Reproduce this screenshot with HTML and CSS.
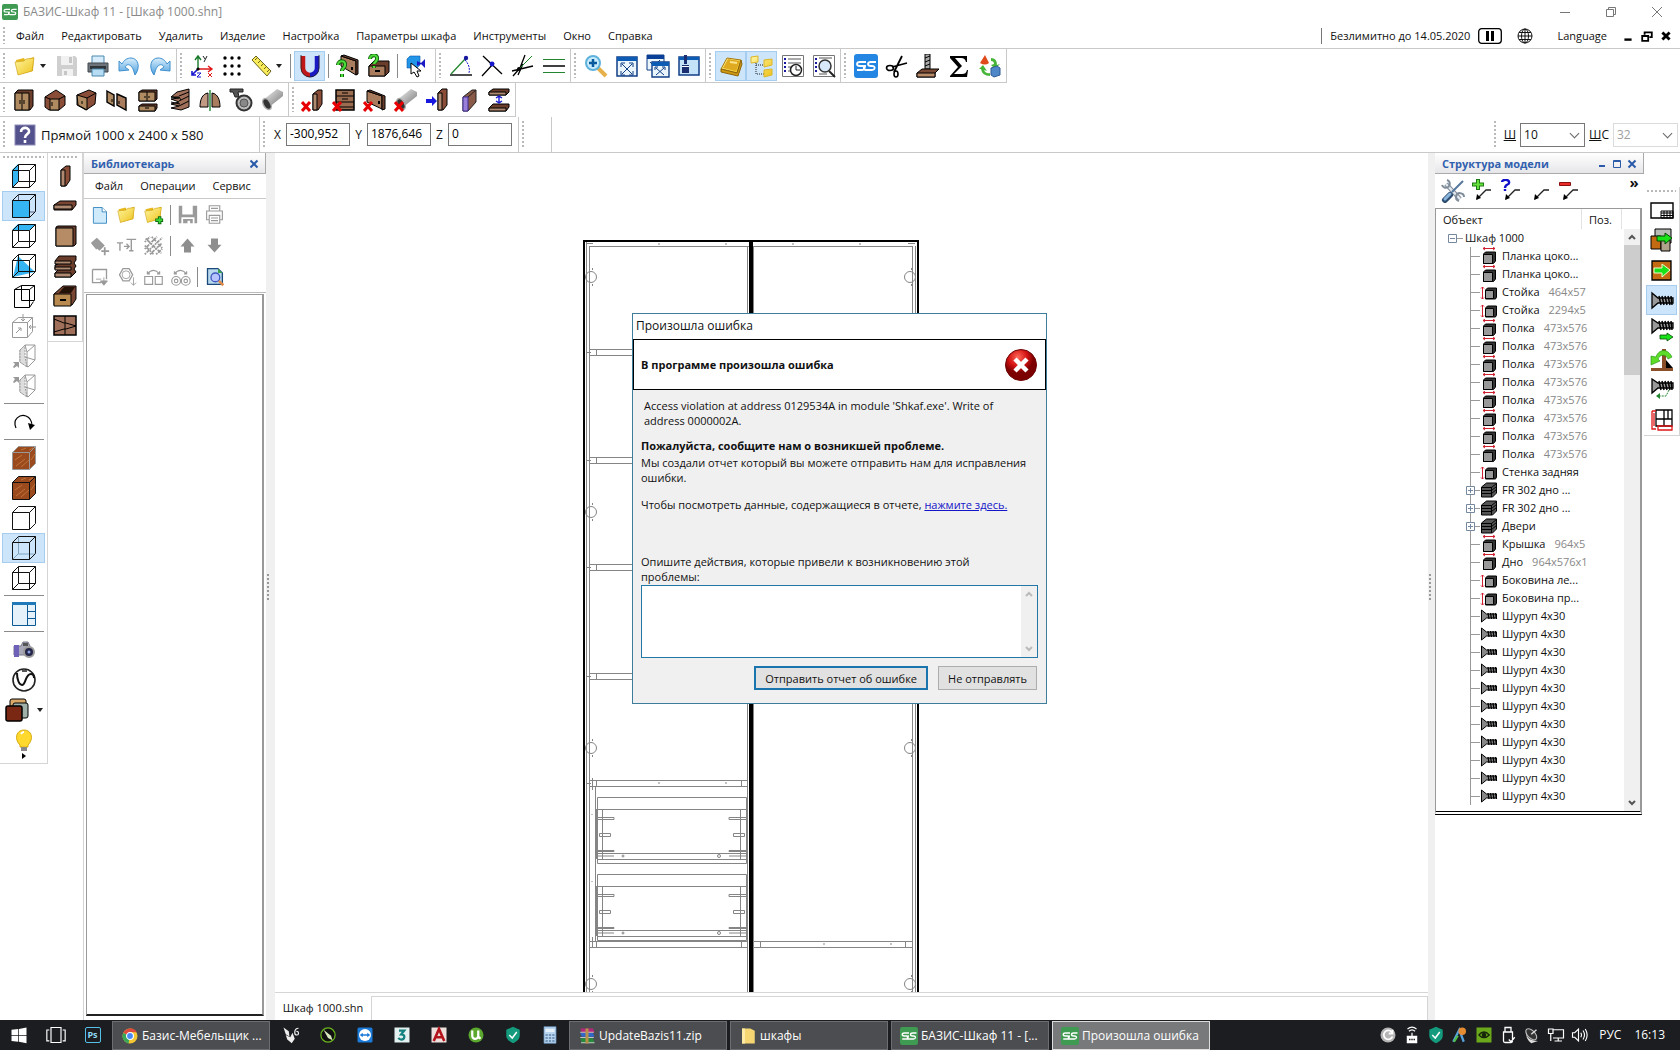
FILE: index.html
```html
<!DOCTYPE html>
<html lang="ru">
  <head>
    <meta charset="UTF-8" />
    <meta name="viewport" content="width=device-width, initial-scale=1.0" />
    <title>БАЗИС-Шкаф 11 - [Шкаф 1000.shn]</title>
    <link rel="stylesheet" href="styles.css">
  </head>
  <body>
    <svg class="sprite" aria-hidden="true">
      <defs>
        <linearGradient id="gold" x2="1" y2="1"><stop offset="0" stop-color="#fff6a0"/><stop offset="1" stop-color="#eec21c"/></linearGradient>
        <linearGradient id="blue" x2="0" y2="1"><stop offset="0" stop-color="#d8eefc"/><stop offset="1" stop-color="#4c9fdd"/></linearGradient>
        <linearGradient id="metal" x2="1" y2="1"><stop offset="0" stop-color="#f4f4f4"/><stop offset="1" stop-color="#707070"/></linearGradient>
        <radialGradient id="red" cx=".4" cy=".25"><stop offset="0" stop-color="#ff6a5a"/><stop offset=".6" stop-color="#d31212"/><stop offset="1" stop-color="#7d0000"/></radialGradient>
      </defs>

      <symbol id="logo" viewBox="0 0 24 24"><rect width="24" height="24" rx="3" fill="currentColor"/><path d="M12 8H6c-4 0-4 4 0 4h3c3 0 2 4-1 4H3M22 8h-5c-4 0-4 4 0 4h1c4 0 3 4 0 4h-6c-3 0-3-4 0-4" fill="none" stroke="#fff" stroke-width="1.800"/></symbol>

      <!-- main toolbar -->
      <symbol id="folder" viewBox="0 0 24 24"><path d="M3 6l8-2 1 2 9-3-1 14-15 4z" fill="#e8b81c"/><path d="M2 8l9-1 2-2 8-1-2 13-14 4z" fill="url(#gold)" stroke="#c99c14" stroke-width=".6"/></symbol>
      <symbol id="save" viewBox="0 0 24 24"><path d="M2 2h18l2 2v18H2z" fill="#cfcfcf"/><path d="M6 2h12v9H6zM7 15h11v7H7z" fill="#f1f1f1"/><path d="M14 3h3v6h-3zM9 17h3v4H9z" fill="#c6c6c6"/></symbol>
      <symbol id="printer" viewBox="0 0 24 24"><path d="M6 2h12v8H6z" fill="#d6ecfa" stroke="#4b88ad"/><path d="M2 9h20v9H2z" fill="#6d747b" stroke="#43494f"/><path d="M4 12h16v3H4z" fill="#2f3439"/><path d="M6 15h12v7H6z" fill="#b5dcf3" stroke="#4b88ad"/></symbol>
      <symbol id="undo" viewBox="0 0 24 24"><path d="M2 7v10l10-1-4-3c2-4 7-3 9 5l1 3C24 13 21 4 14 4 10 4 7 6 5 10z" fill="url(#blue)" stroke="#3f90cf"/></symbol>
      <symbol id="redo" viewBox="0 0 24 24"><path d="M22 7v10l-10-1 4-3c-2-4-7-3-9 5l-1 3C0 13 3 4 10 4c4 0 7 2 9 6z" fill="url(#blue)" stroke="#3f90cf"/></symbol>
      <symbol id="axes" viewBox="0 0 24 24"><path d="M8 15V2M5 6l3-4 3 4" stroke="#187a28" fill="none" stroke-width="1.400"/><path d="M8 15h13M18 12l4 3-4 3" stroke="#e01717" fill="none" stroke-width="1.400"/><path d="M8 15l-6 6M2 17v4h4" stroke="#1717d0" fill="none" stroke-width="1.600"/><circle cx="8" cy="15" r="1.600"/><path d="M13 2l2 3M17 2l-3 6" stroke="#222" fill="none"/><path d="M7 19h4l-4 4h4" stroke="#1717d0" fill="none"/><path d="M18 19l4 4M22 19l-4 4" stroke="#e01717"/></symbol>
      <symbol id="dots" viewBox="0 0 24 24"><g><circle cx="4" cy="4" r="1.700"/><circle cx="11" cy="4" r="1.700"/><circle cx="18" cy="4" r="1.700"/><circle cx="4" cy="12" r="1.700"/><circle cx="11" cy="12" r="1.700"/><circle cx="18" cy="12" r="1.700"/><circle cx="4" cy="20" r="1.700"/><circle cx="11" cy="20" r="1.700"/><circle cx="18" cy="20" r="1.700"/></g></symbol>
      <symbol id="ruler" viewBox="0 0 24 24"><path d="M2 6l4-4 15 15-4 5z" fill="#f8ec5a" stroke="#6b6420"/><path d="M7 4l-2 2M10 7L8 9M13 10l-2 2M16 13l-2 2M19 16l-2 2" stroke="#6b6420"/></symbol>
      <symbol id="magnet" viewBox="0 0 24 24"><path d="M5 2v12a7 7 0 0 0 7 7" fill="none" stroke="#c01818" stroke-width="4.500"/><path d="M19 2v12a7 7 0 0 1-7 7" fill="none" stroke="#1a1ac4" stroke-width="4.500"/><path d="M3 1v13a9 9 0 0 0 18 0V1" fill="none" stroke="#222" stroke-width=".8"/></symbol>
      <symbol id="door-q" viewBox="0 0 24 24"><path d="M5 2l15 5v14L5 12z" fill="#a87c5c" stroke="#000"/><path d="M5 2l3-1 14 5v14l-2 1V7z" fill="#6b3e2c" stroke="#000"/><path d="M16 13v3" stroke="#000" stroke-width="2"/><path d="M2 11c0-5 8-5 7 0 0 3-3 3-3 6M6 20v3" fill="none" stroke="#0b5c0b" stroke-width="4"/><path d="M2 11c0-5 8-5 7 0 0 3-3 3-3 6M6 20v3" fill="none" stroke="#4fdc3a" stroke-width="2.200"/></symbol>
      <symbol id="drawer-q" viewBox="0 0 24 24"><path d="M2 12l5-5h15v11l-4 4H2z" fill="#6b3e2c" stroke="#000"/><path d="M2 12h16v10H2z" fill="#a87c5c" stroke="#000"/><path d="M8 17h5" stroke="#000" stroke-width="2"/><path d="M3 5c0-5 8-5 7 0 0 3-3 3-3 5M7 12v2" fill="none" stroke="#0b5c0b" stroke-width="4"/><path d="M3 5c0-5 8-5 7 0 0 3-3 3-3 5M7 12v2" fill="none" stroke="#4fdc3a" stroke-width="2.200"/></symbol>
      <symbol id="pick" viewBox="0 0 24 24"><path d="M2 5l3-3h10v9l-3 3H2z" fill="#2196e8" stroke="#0a57a8" stroke-width=".6"/><path d="M12 7l4 2 4-4v9l-4-4-4 2z" fill="#1a1ac4"/><path d="M6 9v11l3-2 3 5 2-1-2-5h4z" fill="#fff" stroke="#000"/></symbol>
      <symbol id="angle" viewBox="0 0 24 24"><path d="M1 21h22" stroke="#000" stroke-width="1.400"/><path d="M2 20L17 4" stroke="#21862f" stroke-width="1.300"/><path d="M16 6c4 4 5 9 4 13" fill="none" stroke="#1717d0" stroke-dasharray="2 1"/><circle cx="17" cy="4" r="2.200" fill="#1717a0"/></symbol>
      <symbol id="cross-pt" viewBox="0 0 24 24"><path d="M3 2l19 18M14 9L2 22" stroke="#000" stroke-width="1.300"/><circle cx="12" cy="10" r="2.400" fill="#1717d0"/></symbol>
      <symbol id="rays" viewBox="0 0 24 24"><path d="M9 14L14 1M1 17l21-5M7 21l5-11M2 22l7-8" stroke="#000" stroke-width="1.300"/><path d="M9 14L21 2" stroke="#21862f"/><circle cx="8" cy="15" r="2"/></symbol>
      <symbol id="lines" viewBox="0 0 24 24"><path d="M1 5.500h22M1 18.500h22" stroke="#21862f"/><path d="M1 12h22" stroke="#000" stroke-width="1.500"/></symbol>
      <symbol id="zoom-in" viewBox="0 0 24 24"><path d="M14 14l8 8" stroke="#e6b14a" stroke-width="4"/><circle cx="9" cy="9" r="7" fill="#c8ecfb" stroke="#5fb2dd" stroke-width="2"/><path d="M5 9h8M9 5v8" stroke="#075a9c" stroke-width="2.500"/></symbol>
      <symbol id="fit" viewBox="0 0 24 24"><path d="M2 3h20v19H2z" fill="#eaf5fc" stroke="#123f86" stroke-width="1.500"/><path d="M2 3h20v4H2z" fill="#0c5bb5"/><path d="M7 10l10 10M17 10L7 20M6 13V9h4M14 9h4v4M18 17v4h-4M10 21H6v-4" fill="none" stroke="#123f86"/></symbol>
      <symbol id="fit-all" viewBox="0 0 24 24"><path d="M1 1h17v15H1z" fill="#eaf5fc" stroke="#123f86"/><path d="M1 1h17v4H1z" fill="#0a3f98"/><path d="M4 8l5 5M14 6l-4 4" stroke="#123f86"/><path d="M6 8h17v15H6z" fill="#eaf5fc" stroke="#123f86" stroke-width="1.400"/><path d="M6 8h17v4H6z" fill="#0c5bb5"/><path d="M10 14l8 7M18 14l-8 7M9 16v-3h3M16 13h3v3" fill="none" stroke="#123f86"/></symbol>
      <symbol id="brush-win" viewBox="0 0 24 24"><path d="M2 3h20v18H2z" fill="#c4e3f8" stroke="#123f86" stroke-width="1.500"/><path d="M2 3h20v3H2z" fill="#0c5bb5"/><path d="M7 1h3v9H7zM5 11h7v8H5z" fill="#1b2f70"/><path d="M5 12.500h7" stroke="#fff"/></symbol>
      <symbol id="book" viewBox="0 0 24 24"><path d="M2 15L8 4l14 2-4 13z" fill="url(#gold)" stroke="#a87a0e"/><path d="M2 15l16 4 4-13 1 4-4 12-17-4z" fill="#d09812" stroke="#8b650c"/><path d="M4 14L9 5l12 2-4 10z" fill="#e0aa20"/><path d="M11 8l7 1" stroke="#fbe48a" stroke-width="2"/></symbol>
      <symbol id="tree" viewBox="0 0 24 24"><path d="M6 9v11h8M6 11h8" fill="none" stroke="#222" stroke-dasharray="1 1"/><path d="M1 3l7-1v6l-7 1zM14 6l8-1v6l-8 2zM14 16l8-1v6l-8 2z" fill="url(#gold)" stroke="#dcb62a"/></symbol>
      <symbol id="list-clock" viewBox="0 0 24 24"><path d="M1.500 1.500h21v21h-21z" fill="#fff" stroke="#777"/><path d="M7 5h13M7 9h13M7 13h4M7 17h3" stroke="#555"/><path d="M4 4v16" stroke="#1717a0" stroke-width="2" stroke-dasharray="2 2"/><circle cx="15" cy="16" r="5.500" fill="#fff" stroke="#222" stroke-width="1.500"/><path d="M15 12v4h4" fill="none" stroke="#222"/></symbol>
      <symbol id="list-find" viewBox="0 0 24 24"><path d="M1.500 1.500h21v21h-21z" fill="#fff" stroke="#777"/><path d="M7 4h13M7 20h8" stroke="#555"/><path d="M4 4v16" stroke="#1717a0" stroke-width="2" stroke-dasharray="2 2"/><path d="M17 17l6 6" stroke="#222" stroke-width="2"/><circle cx="13" cy="12" r="6" fill="#d8e9fb" stroke="#333" stroke-width="1.500"/></symbol>
      <symbol id="scissors" viewBox="0 0 24 24"><path d="M17 2L9 18M22 9L7 13" stroke="#000" stroke-width="1.800"/><ellipse cx="5" cy="14" rx="3.500" ry="2.500" fill="none" stroke="#000" stroke-width="1.600"/><ellipse cx="11" cy="20" rx="2" ry="3" fill="none" stroke="#000" stroke-width="1.600"/></symbol>
      <symbol id="drill" viewBox="0 0 24 24"><path d="M9 0h5v15H9z" fill="#aaa" stroke="#000"/><path d="M9 4l5-2M9 8l5-2M9 12l5-2" stroke="#000"/><path d="M1 19l5-4h17l-4 4v4H1z" fill="#7a4a35" stroke="#000"/><path d="M1 19h18v4H1z" fill="#b88a68" stroke="#000"/></symbol>
      <symbol id="sigma" viewBox="0 0 24 24"><path d="M3 2h17v6h-1c-1-3-2-4-5-4H8l7 8-8 8h8c3 0 4-1 5-4h1l-1 7H3v-1l8-9-8-9z"/></symbol>
      <symbol id="shapes" viewBox="0 0 24 24"><path d="M2 9l5-8 4 8q-4 3-9 0z" fill="#e04a1a"/><path d="M13 4q6 0 6 7l3-1-5 5-4-4 3-1q0-3-3-3z" fill="#46b436"/><path d="M5 11l4 6-3-1q2 4 6 3v3q-8 0-9-7H1z" fill="#46b436"/><path d="M13 14l6-2 3 2v7l-6 2-3-2z" fill="#4f88c8" stroke="#2d5b94"/></symbol>

      <!-- furniture toolbar -->
      <symbol id="wardrobe" viewBox="0 0 24 24"><path d="M3 5l3-3h15v16l-3 4H3z" fill="#6b3e2c" stroke="#000"/><path d="M3 5h14v17H3z" fill="#b08a60" stroke="#000"/><path d="M10 5v17M8 12v4M12 12v4" stroke="#000"/></symbol>
      <symbol id="corner1" viewBox="0 0 24 24"><path d="M2 9l11-7 9 6v9l-6 5H6l-4-3z" fill="#8a4e38" stroke="#000"/><path d="M7 11h9v11H7z" fill="#b08a60" stroke="#000"/><path d="M2 9l5 2M22 8l-6 3M9 14v4" stroke="#000"/></symbol>
      <symbol id="corner2" viewBox="0 0 24 24"><path d="M3 7l12-5 7 3-1 11-9 6-9-5z" fill="#8a4e38" stroke="#000"/><path d="M3 7l10 3v12l-9-5z" fill="#b08a60" stroke="#000"/><path d="M13 10l9-5M8 13v3" stroke="#000"/></symbol>
      <symbol id="doors" viewBox="0 0 24 24"><path d="M2 3l7 4v11l-7-4z" fill="#b08a60" stroke="#000" stroke-width="1.400"/><path d="M12 6l9 4v12l-9-5z" fill="#a87c5c" stroke="#000" stroke-width="1.400"/><path d="M7 11v3M14 13v3" stroke="#000"/></symbol>
      <symbol id="chest" viewBox="0 0 24 24"><path d="M3 4l3-2h15v9l-2 2H3zM3 18l3-2h15v4l-2 3H3z" fill="#6b3e2c" stroke="#000"/><path d="M3 4h16v9H3zM3 18h16v5H3z" fill="#b08a60" stroke="#000"/><path d="M11 4v9M9 8v2M13 8v2M9 20h4" stroke="#000"/></symbol>
      <symbol id="shelves" viewBox="0 0 24 24"><path d="M4 9l6-5 12-3v18l-8 3-10-2 8-2-8-2 8-2-8-3 8-1z" fill="#a0705a" stroke="#000"/><path d="M12 8l10-4M12 13l10-5M12 18l10-5M4 9h8l2 3M4 14l9 2" stroke="#000" fill="none"/></symbol>
      <symbol id="arch" viewBox="0 0 24 24"><path d="M10 5C4 6 2 12 2 19h8z" fill="#c29a84" stroke="#000"/><path d="M14 5c6 1 8 7 8 14h-8z" fill="#a87c5c" stroke="#000"/><path d="M12 2v21" stroke="#21862f" stroke-width="1.400"/></symbol>
      <symbol id="wheel" viewBox="0 0 24 24"><path d="M1 1h13v3H9l1 5H6L4 4H1z" fill="#555" stroke="#222"/><circle cx="15" cy="15" r="7.500" fill="#bbb" stroke="#333" stroke-width="2"/><circle cx="15" cy="15" r="4" fill="#888" stroke="#555"/></symbol>
      <symbol id="tube" viewBox="0 0 24 24"><path d="M3 12L17 1l6 3v4L8 20z" fill="url(#metal)"/><ellipse cx="7" cy="16" rx="3.500" ry="6" transform="rotate(-30 7 16)" fill="#333" stroke="#aaa" stroke-width="1.500"/></symbol>
      <symbol id="panel-v" viewBox="0 0 24 24"><path d="M8 6l5-4h4v14l-4 6H8z" fill="#8a4e38" stroke="#000"/><path d="M8 6h4v16H8z" fill="#b08a70" stroke="#000"/></symbol>
      <symbol id="cross" viewBox="0 0 24 24"><path d="M1 14l8 9M9 14l-8 9" stroke="#e60000" stroke-width="3"/></symbol>
      <symbol id="rack" viewBox="0 0 24 24"><path d="M4 2h18v20H4z" fill="#9a6c50" stroke="#000" stroke-width="1.500"/><path d="M4 8h18M4 14h18M4 19h18M10 5h6M10 11h6" stroke="#000"/></symbol>
      <symbol id="door" viewBox="0 0 24 24"><path d="M4 3l15 5v13L4 14z" fill="#a87c5c" stroke="#000"/><path d="M4 3l3-1 15 6v13l-3 1V8z" fill="#6b3e2c" stroke="#000"/><path d="M16 13v3" stroke="#000" stroke-width="2"/></symbol>
      <symbol id="insert" viewBox="0 0 24 24"><path d="M13 5l4-4h5v16l-4 5h-5z" fill="#8a4e38" stroke="#000"/><path d="M13 5h4v17h-4z" fill="#b08a70" stroke="#000"/><path d="M1 11h6V8l5 5-5 5v-3H1z" fill="#1717e0"/></symbol>
      <symbol id="edge" viewBox="0 0 24 24"><path d="M7 9l9-7h4v12l-8 9H7z" fill="#8a5a48" stroke="#222"/><path d="M7 9h5v14H7z" fill="#9a80d8" stroke="#3c2c90"/><path d="M12 9l8-7" stroke="#222"/></symbol>
      <symbol id="gap" viewBox="0 0 24 24"><path d="M2 4l4-3h16v3l-3 3H2zM2 20l4-4h16v3l-3 4H2z" fill="#6b3e2c" stroke="#000"/><path d="M2 4h17v3H2zM2 20h17v3H2z" fill="#b08a70" stroke="#000"/><path d="M12 8v7M9 10l3-2 3 2M9 13l3 2 3-2" fill="none" stroke="#1717d0" stroke-width="1.400"/></symbol>
      <symbol id="help" viewBox="0 0 24 24"><rect x="2" y="2" width="20" height="20" fill="#54528c" stroke="#8d8bb8"/><path d="M8 9c0-6 9-5 8 0-1 3-4 2-4 6M12 17v3" fill="none" stroke="#fff" stroke-width="2.600"/></symbol>

      <!-- view cubes -->
      <symbol id="cube-wire" viewBox="0 0 24 24"><path d="M.5 6.500h17v17H.5zM6.500.5h17v17h-17zM.5 6.500l6-6M17.500 6.500l6-6M17.500 23.500l6-6M.5 23.500l6-6" fill="none" stroke="currentColor"/></symbol>
      <symbol id="cube-solid" viewBox="0 0 24 24"><path d="M.5 6.500l6-6h17v17l-6 6H.5zM.5 6.500h17v17M17.500 6.500l6-6" fill="none" stroke="currentColor"/></symbol>
      <symbol id="cube-wood" viewBox="0 0 24 24"><path d="M.5 6.500l6-6h17v17l-6 6H.5z" fill="#9a4a1c" stroke="currentColor"/><path d="M3 14l7-5M4 20l9-7M9 21l8-7M9 4l5-2M17 4l4-2M19 14l4-6" stroke="#c07438"/><path d="M.5 6.500h17v17M17.500 6.500l6-6" fill="none" stroke="currentColor"/></symbol>
      <symbol id="cube-cut" viewBox="0 0 24 24"><path d="M8 6l5-5h10v15l-7 7-8-5z" fill="#fff" stroke="#9a9a9a"/><path d="M8 6l5-5v12l2 10-7-5z" fill="#ddd" stroke="#9a9a9a" stroke-dasharray="2 1"/><path d="M15 23V8l8-7M13 1l2 7M13 13l10 3" fill="none" stroke="#9a9a9a"/></symbol>
      <symbol id="rotate" viewBox="0 0 24 24"><path d="M4 18C0 9 8 4 14 6c5 2 6 6 6 10" fill="none" stroke="#000" stroke-width="1.200"/><path d="M16 13l7 2-5 5z"/></symbol>
      <symbol id="layout" viewBox="0 0 24 24"><path d="M.5.500h23v23H.5z" fill="#e6f2f9" stroke="#0c5a94"/><path d="M0 0h24v3H0z" fill="#1f79b8"/><path d="M15.500 3v21M16 9.500h8M16 16.500h8" stroke="#0c5a94"/></symbol>
      <symbol id="camera" viewBox="0 0 24 24"><path d="M2 8h7l2-4h5l2 4v9H2z" fill="#a8a8b8" stroke="#77778c"/><path d="M2 7h5v12H2z" fill="#6f60b8"/><path d="M11 5h5v3h-5z" fill="#555"/><circle cx="17" cy="14" r="5" fill="#25254a" stroke="#9a9a9a" stroke-width="2"/><circle cx="17" cy="14" r="1.500" fill="#8aa0e0"/></symbol>
      <symbol id="vray" viewBox="0 0 24 24"><circle cx="12" cy="12" r="11" fill="#fff" stroke="#222" stroke-width="1.600"/><path d="M5 5c0 6 2 12 5 12 4 0 3-11 9-11 3 0 3 3 3 4" fill="none" stroke="#111" stroke-width="2"/><path d="M10 3h5" stroke="#555" stroke-width="2"/></symbol>
      <symbol id="materials" viewBox="0 0 24 24"><rect x="5" y="1" width="16" height="16" rx="2" fill="#d8a868" stroke="#000"/><rect x="8" y="5" width="15" height="15" rx="2" fill="#9fb0a8" stroke="#000"/><rect x="1" y="8" width="16" height="15" rx="2" fill="#7a2814" stroke="#000" stroke-width="1.500"/></symbol>
      <symbol id="bulb" viewBox="0 0 24 24"><path d="M8 16C2 10 4 1 12 1s10 9 4 15v2H8z" fill="#ffd92e" stroke="#d8aa10"/><path d="M9 5q1-2 3-2" stroke="#fff" stroke-width="2"/><path d="M9 18h6v4H9z" fill="#8a8a8a"/></symbol>
      <symbol id="board-h" viewBox="0 0 24 24"><path d="M1 11l6-4h16v4l-4 5H1z" fill="#7a4634" stroke="#000"/><path d="M1 11h18v4H1z" fill="#b08a70" stroke="#000"/></symbol>
      <symbol id="board-f" viewBox="0 0 24 24"><path d="M3 3l2-1h18v18l-2 2H3z" fill="#6b3e2c" stroke="#000"/><path d="M3 4h17v18H3z" fill="#b58c66" stroke="#000"/></symbol>
      <symbol id="stack" viewBox="0 0 24 24"><path d="M2 7l4-5h17v4l-2 3 2 3-2 3 2 3-5 5H2v-4l3-3-3-1v-4l3-1z" fill="#6b3e2c" stroke="#000"/><path d="M2 7h16v3H2zM2 13h16v3H2zM2 19h16v4H2z" fill="#b08a70" stroke="#000"/></symbol>
      <symbol id="box" viewBox="0 0 24 24"><path d="M1 10l9-8h13v13l-4 6H1z" fill="#7a4634" stroke="#000"/><path d="M6 9l5-6h11l-4 6z" fill="#241208"/><path d="M1 10h17v12H1z" fill="#b88a50" stroke="#000"/><path d="M7 16h6" stroke="#000" stroke-width="2"/></symbol>
      <symbol id="hatch-door" viewBox="0 0 24 24"><path d="M1 2h22v19H1z" fill="#a0705a" stroke="#000" stroke-width="1.500"/><path d="M12 2v19M1 5l10 4 2 0 10 3M1 18l10-3 2 0 10-3" fill="none" stroke="#000"/></symbol>

      <!-- librarian -->
      <symbol id="page" viewBox="0 0 24 24"><path d="M5 4h10l5 5v13H5z" fill="#cfeafa" stroke="#2f82bd"/><path d="M15 4v5h5" fill="#fff" stroke="#2f82bd"/></symbol>
      <symbol id="plus" viewBox="0 0 24 24"><path d="M19 14v9M14 18.500h9" stroke="#0b6a0b" stroke-width="4"/><path d="M19 15v7M15 18.500h7" stroke="#3cd83c" stroke-width="2"/></symbol>
      <symbol id="disk" viewBox="0 0 24 24"><path d="M2 2h4v10h12V2h5v20h-3v-7H5v7H2z" fill="#9a9a9a"/><path d="M7 17h11v5h-3v-3h-3v3H7z" fill="#9a9a9a"/></symbol>
      <symbol id="print-o" viewBox="0 0 24 24"><path d="M6 8V2h12v6M6 18H3V8h18v10h-3M6 13h12v9H6zM8 5h8M8 16h8M8 19h8" fill="none" stroke="#9a9a9a" stroke-width="1.300"/></symbol>
      <symbol id="tag" viewBox="0 0 24 24"><path d="M2 9l7-6 9 9-6 6z" fill="#9a9a9a"/><path d="M4 10l5 6M18 14v9M14 18.500h9" stroke="#9a9a9a" stroke-width="2"/></symbol>
      <symbol id="rename" viewBox="0 0 24 24"><path d="M1 9h7M4.500 9v9M12 5h11M17.500 5v13M15 18h5M9 13h6M12 10l3 3-3 3" fill="none" stroke="#9a9a9a" stroke-width="1.600"/></symbol>
      <symbol id="texture" viewBox="0 0 24 24"><path d="M2 8l6-6M2 16L16 2M2 22L22 3M8 22l14-13M15 22l7-6M3 4l18 17M10 2l12 13M2 12l10 10" stroke="#999" stroke-width="2" stroke-dasharray="2 1 4 1"/></symbol>
      <symbol id="up" viewBox="0 0 24 24"><path d="M12 4l8 9h-4v7H8v-7H4z" fill="#8e8e8e"/></symbol>
      <symbol id="down" viewBox="0 0 24 24"><path d="M12 20l8-9h-4V4H8v7H4z" fill="#8e8e8e"/></symbol>
      <symbol id="insert-o" viewBox="0 0 24 24"><path d="M4 4h16v11M14 19H4V4" fill="none" stroke="#9a9a9a" stroke-width="1.500"/><path d="M8 15h6M17 13v7M13 17l4 5 4-5z" stroke="#9a9a9a" fill="#9a9a9a"/></symbol>
      <symbol id="nut-o" viewBox="0 0 24 24"><path d="M8 3h7l4 7-4 7H8l-4-7z" fill="none" stroke="#9a9a9a" stroke-width="1.500"/><circle cx="11.500" cy="10" r="4.500" fill="none" stroke="#9a9a9a"/><path d="M20 13v9M17 19l3 3 3-3" fill="none" stroke="#9a9a9a"/></symbol>
      <symbol id="mirror-o" viewBox="0 0 24 24"><path d="M2 12h9v9H2zM14 12h8v9h-8zM5 9q7-8 14 0M5 6v3h3M19 6v3h-3" fill="none" stroke="#9a9a9a" stroke-width="1.300"/></symbol>
      <symbol id="wheels-o" viewBox="0 0 24 24"><path d="M5 9q7-8 14 0M5 6v3h3M19 6v3h-3" fill="none" stroke="#9a9a9a" stroke-width="1.300"/><g fill="none" stroke="#9a9a9a" stroke-width="1.300"><circle cx="7" cy="17" r="5"/><circle cx="18" cy="17" r="5"/><circle cx="7" cy="17" r="2"/><circle cx="18" cy="17" r="2"/></g></symbol>
      <symbol id="preview" viewBox="0 0 24 24"><path d="M4 3h12l5 5v13H4z" fill="#b9d9ee" stroke="#1a4a7a" stroke-width="1.500"/><path d="M16 3v5h5z" fill="#3fa648"/><circle cx="13" cy="13" r="5" fill="#b8c4ff" stroke="#4058c0" stroke-width="1.500"/><path d="M17 17l5 5" stroke="#e08a4a" stroke-width="3"/></symbol>

      <!-- structure panel -->
      <symbol id="tools" viewBox="0 0 24 24"><path d="M5 5l14 15" stroke="#7f8c99" stroke-width="4.500"/><path d="M5 5l14 15" stroke="#e4eaf0" stroke-width="2.500"/><path d="M6 1a4 4 0 1 1-5 5M18 22a4 4 0 1 1 5-4" fill="none" stroke="#7f8c99" stroke-width="2"/><path d="M22 2L11 13" stroke="#54779b" stroke-width="2"/><path d="M9 16l-5 5" stroke="#2c4c70" stroke-width="6" stroke-linecap="round"/><path d="M9 15l-5 5" stroke="#8ab4dc" stroke-width="3" stroke-linecap="round"/></symbol>
      <symbol id="leader" viewBox="0 0 24 24"><path d="M21 11h-5L7 20" fill="none" stroke="#222" stroke-width="1.300"/><path d="M6 21l1-6 4 4z"/></symbol>
      <symbol id="l-plus" viewBox="0 0 24 24"><path d="M8 0v11M2 5.500h12" stroke="#1e7a14" stroke-width="4"/><path d="M8 1v9M3 5.500h10" stroke="#67e23c" stroke-width="2"/></symbol>
      <symbol id="l-ask" viewBox="0 0 24 24"><path d="M3 3c0-3 8-3 7 1 0 2-4 1-4 5M6 10v2" fill="none" stroke="#1010c8" stroke-width="2.400"/></symbol>
      <symbol id="l-minus" viewBox="0 0 24 24"><path d="M2.500 3.500h11v3h-11z" fill="#ec2b2b" stroke="#8a1010"/></symbol>
      <symbol id="panel-h-i" viewBox="0 0 18 18"><path d="M3 1.500h12M5 0L3 1.500 5 3M13 0l2 1.500L13 3" fill="none" stroke="#cf2030"/><path d="M3.500 7l2-2h10v9l-2 2.500h-10z" fill="#333" stroke="#000"/><path d="M3.500 7.500h9v9h-9z" fill="#999" stroke="#000"/></symbol>
      <symbol id="panel-v-i" viewBox="0 0 18 18"><path d="M2.500 4v12M1 5.500L2.500 4 4 5.500M1 14.500L2.500 16 4 14.500" fill="none" stroke="#cf2030"/><path d="M5.500 7l2-2h9v9l-1 2h-10z" fill="#333" stroke="#000"/><path d="M5.500 7.500h8v8h-8z" fill="#999" stroke="#000"/></symbol>
      <symbol id="stack-i" viewBox="0 0 18 18"><path d="M1.500 6l5-4h10v10l-4 4h-11z" fill="#555" stroke="#000"/><path d="M1.500 6.500h10l5-4M1.500 9.500h10l5-4M1.500 12.500h10l5-4M11.500 6v10" fill="none" stroke="#000"/></symbol>
      <symbol id="screw-i" viewBox="0 0 18 18"><path d="M1.500 3l5 4h10v4h-10l-5 4z" fill="#888" stroke="#000"/><path d="M8 6l1 6M10.500 6l1 6M13 6l1 6M15.500 6l1 6" stroke="#000" stroke-width="1.300"/></symbol>

      <!-- right bar -->
      <symbol id="sheet" viewBox="0 0 24 24"><path d="M1 5h22v15H1z" fill="#fff" stroke="#000" stroke-width="1.400"/><path d="M11 13h12v7H11zM11 15h12M11 17.500h12M14 13v7M17 13v7M20 13v7" fill="none" stroke="#000"/></symbol>
      <symbol id="mat-arrow" viewBox="0 0 24 24"><path d="M5 1h16v14H5z" fill="#b7bcb4" stroke="#000"/><path d="M1 8h10v13H1z" fill="#c46a12" stroke="#000"/><path d="M11 12h9v11h-9z" fill="#b0a28c" stroke="#000"/><path d="M7 8h8V5l7 5-7 6v-3H7z" fill="#18e218" stroke="#074a07"/></symbol>
      <symbol id="mat-go" viewBox="0 0 24 24"><path d="M2 3h19v19H2z" fill="#c46a12" stroke="#000" stroke-width="1.300"/><path d="M4 10h8V6l8 6-8 7v-4H4z" fill="#18e218" stroke="#efffcf"/></symbol>
      <symbol id="screw" viewBox="0 0 24 24"><path d="M2 5l6 5h15v5H8l-6 5z" fill="#999" stroke="#000" stroke-width="1.300"/><path d="M9 8l2 9M12 8l2 9M15 8l2 9M18 8l2 9M21 8l1 9" stroke="#000" stroke-width="1.500"/></symbol>
      <symbol id="screw-go" viewBox="0 0 24 24"><path d="M2 1l6 4h15v5H8l-6 5z" fill="#999" stroke="#000" stroke-width="1.300"/><path d="M9 3l2 9M12 3l2 9M15 3l2 9M18 3l2 9M21 3l1 9" stroke="#000" stroke-width="1.500"/><path d="M10 17h7v-2l6 4-6 4v-2h-7z" fill="#18e218" stroke="#074a07" stroke-width=".8"/></symbol>
      <symbol id="turn" viewBox="0 0 24 24"><path d="M12 1h4v21h-4zM1 20h22v3H1z" fill="#8a4e28"/><path d="M16 12v8h7z"/><path d="M22 9C17-1 8 2 6 9L1 8v9l9-4-2-2c2-5 8-5 10 0z" fill="#5ddc28" stroke="#1f8a10" stroke-width=".6"/></symbol>
      <symbol id="screw-pt" viewBox="0 0 24 24"><path d="M2 1l6 4h15v5H8l-6 5z" fill="#999" stroke="#000" stroke-width="1.300"/><path d="M9 3l2 9M12 3l2 9M15 3l2 9M18 3l2 9M21 3l1 9" stroke="#000" stroke-width="1.500"/><path d="M19 12l-3 6h-7" fill="none" stroke="#21862f" stroke-dasharray="2 1"/><path d="M6 18l4-3v6z" fill="#21862f"/></symbol>
      <symbol id="plan" viewBox="0 0 24 24"><path d="M6 2h16v16H6zM6 11h16M14 2v16M18 2v9" fill="none" stroke="#000" stroke-width="1.300"/><path d="M2 3v18h4M4 5v13M8 22h14v-4H8zM2 3h4" fill="none" stroke="#e01717" stroke-width="1.300"/></symbol>

      <!-- taskbar -->
      <symbol id="win" viewBox="0 0 24 24"><path d="M2 5l9-1v8H2zM12 4l10-2v10H12zM2 13h9v8l-9-1zM12 13h10v10l-10-2z" fill="#fff"/></symbol>
      <symbol id="taskview" viewBox="0 0 24 24"><path d="M6 3h12v18H6zM4 6H1v13h3M20 6h3v13h-3" fill="none" stroke="#fff" stroke-width="1.400"/></symbol>
      <symbol id="chrome" viewBox="0 0 24 24"><circle cx="12" cy="12" r="10" fill="#f3c733"/><path d="M12 12L3 8a10 10 0 0 1 18-1h-9z" fill="#dd4b3e"/><path d="M12 12l-2 10A10 10 0 0 1 3 8z" fill="#3aa757"/><circle cx="12" cy="12" r="4.600" fill="#4a8af4" stroke="#fff" stroke-width="1.500"/></symbol>
      <symbol id="t-shift" viewBox="0 0 24 24"><path d="M2 2l7 5 1 7-5-3zM5 12l6 3 3-6 3 8-4 6-6-5z" fill="#eee"/><path d="M22 3q-5 0-5 6 0 3 3 3 2 0 2-2.500T19 7" fill="none" stroke="#eee" stroke-width="1.600"/></symbol>
      <symbol id="t-corel" viewBox="0 0 24 24"><circle cx="12" cy="12" r="9.500" fill="#111" stroke="#6cb51e" stroke-width="1.600"/><path d="M6 5l10 8 2 6-6-3z" fill="#d8e8c0"/></symbol>
      <symbol id="t-tv" viewBox="0 0 24 24"><rect x="2" y="2" width="20" height="20" rx="2" fill="#1c7bd8"/><circle cx="12" cy="12" r="8" fill="#fff"/><path d="M5 12l4-3v2h6V9l4 3-4 3v-2H9v2z" fill="#1c7bd8"/></symbol>
      <symbol id="t-max" viewBox="0 0 24 24"><path d="M2 2h20v20H2z" fill="#e3f1f0"/><path d="M8 6h7l-4 5c6 0 5 7 0 7-2 0-3-1-4-2" fill="none" stroke="#12817f" stroke-width="3"/></symbol>
      <symbol id="t-acad" viewBox="0 0 24 24"><path d="M2 2h20v20H2z" fill="#eee0dd"/><path d="M5 20l7-16 7 16M8 15h8" fill="none" stroke="#b3141c" stroke-width="3.500"/></symbol>
      <symbol id="t-ut" viewBox="0 0 24 24"><circle cx="12" cy="12" r="10" fill="#5aa82e"/><path d="M7 6v7c0 6 8 5 8 0V6M15 14l3 3" fill="none" stroke="#fff" stroke-width="3"/></symbol>
      <symbol id="t-shield" viewBox="0 0 24 24"><path d="M12 1l9 4v8c0 5-5 8-9 10-4-2-9-5-9-10V5z" fill="#149a7d"/><path d="M7 12l4 4 6-8" fill="none" stroke="#fff" stroke-width="2"/></symbol>
      <symbol id="t-calc" viewBox="0 0 24 24"><path d="M4 1h16v22H4z" fill="#b8d4ee" stroke="#6a94bd"/><path d="M6 4h12v4H6z" fill="#e4f0fa"/><path d="M6 12h12M6 16h12M6 20h12" stroke="#5880a8" stroke-width="2" stroke-dasharray="3 1.500"/></symbol>
      <symbol id="t-rar" viewBox="0 0 24 24"><path d="M3 2h17l2 5H5z" fill="#b4287a"/><path d="M3 8h17l2 5H5z" fill="#3468c8"/><path d="M3 15h17l2 6H5z" fill="#288a3c"/><path d="M3 7h18M3 14h18M4 21h18" stroke="#eee"/><path d="M10 2h4v20h-4z" fill="#b8924a"/></symbol>
      <symbol id="t-folder" viewBox="0 0 24 24"><path d="M4 2h11l6 3v17H4z" fill="#f6d672"/><path d="M4 2h4v20H4z" fill="#ffe9a4"/></symbol>
      <symbol id="y-sync" viewBox="0 0 24 24"><circle cx="12" cy="12" r="10" fill="#b5b5b5"/><path d="M17 8a6 6 0 1 0 1 6M18 5v5h-5" fill="none" stroke="#fff" stroke-width="2.400"/></symbol>
      <symbol id="y-router" viewBox="0 0 24 24"><path d="M5 13h14v10H5z" fill="#fff"/><path d="M12 14V9M8 7q4-4 8 0M6 4q6-5 12 0" fill="none" stroke="#fff" stroke-width="1.600"/><path d="M8 18h8" stroke="#222" stroke-width="2" stroke-dasharray="2 1"/></symbol>
      <symbol id="y-pen" viewBox="0 0 24 24"><path d="M3 21L11 5l6 16" fill="none" stroke="#58a3dd" stroke-width="3"/><circle cx="15" cy="7" r="5" fill="#e58b32"/><path d="M4 21l5-8" stroke="#4fbf48" stroke-width="3"/></symbol>
      <symbol id="y-nv" viewBox="0 0 24 24"><path d="M2 2h20v20H2z" fill="#6ba81b"/><path d="M5 12q7-8 14 0-7 7-14 0" fill="none" stroke="#16240a" stroke-width="1.800"/><circle cx="12" cy="12" r="3" fill="#16240a"/></symbol>
      <symbol id="y-usb" viewBox="0 0 24 24"><path d="M8 8V2h8v6M6 8h12v12q0 2-2 2H8q-2 0-2-2zM13 18l3 3 5-6" fill="none" stroke="#fff" stroke-width="1.700"/></symbol>
      <symbol id="y-dish" viewBox="0 0 24 24"><ellipse cx="11" cy="11" rx="5" ry="9" transform="rotate(-45 11 11)" fill="#333" stroke="#bbb" stroke-width="1.500"/><path d="M4 6q0 14 16 14l-9 3q-8-6-7-17" fill="#ddd"/><path d="M11 11l7-6" stroke="#ddd" stroke-width="2"/></symbol>
      <symbol id="y-net" viewBox="0 0 24 24"><path d="M8 5h14v11H8M15 16v4M10 20h10M2 4h6v6H2zM5 10v10" fill="none" stroke="#fff" stroke-width="1.600"/></symbol>
      <symbol id="y-vol" viewBox="0 0 24 24"><path d="M2 9h3l5-5v16l-5-5H2zM13 9q2 3 0 6M16 6q4 6 0 12M19 4q5 8 0 16" fill="none" stroke="#fff" stroke-width="1.500"/></symbol>
    </svg>

    <div class="app">
      <header class="titlebar">
        <svg class="icon16 green"><use href="#logo"/></svg>
        <h1>БАЗИС-Шкаф 11 - [Шкаф 1000.shn]</h1>
        <div class="win-buttons">
          <button aria-label="Свернуть"><svg viewBox="0 0 12 12"><path d="M1 6.500h10"/></svg></button>
          <button aria-label="Восстановить"><svg viewBox="0 0 12 12"><path d="M1.500 3.500h7v7h-7zM3.500 3V1.500h7v7H9"/></svg></button>
          <button aria-label="Закрыть"><svg viewBox="0 0 12 12"><path d="M1 1l10 10M11 1L1 11"/></svg></button>
        </div>
      </header>

      <nav class="menubar">
        <i class="grip"></i>
        <button>Файл</button><button>Редактировать</button><button>Удалить</button><button>Изделие</button><button>Настройка</button><button>Параметры шкафа</button><button>Инструменты</button><button>Окно</button><button>Справка</button>
        <div class="menu-right">
          <span class="license">Безлимитно до 14.05.2020</span>
          <button class="pause" aria-label="Пауза"><svg viewBox="0 0 24 16"><rect x=".7" y=".7" width="22.600" height="14.600" rx="3" fill="none" stroke="#000" stroke-width="1.300"/><path d="M8 3h3v10H8zM13 3h3v10h-3z"/></svg></button>
          <svg class="globe" viewBox="0 0 16 16"><path d="M8 1v14M1 8h14M2 4.500h12M2 11.500h12" /><circle cx="8" cy="8" r="7"/><ellipse cx="8" cy="8" rx="3.500" ry="7"/></svg>
          <button class="language">Language</button>
          <div class="mdi-buttons">
            <button aria-label="Свернуть окно"><svg viewBox="0 0 10 10"><path d="M2 8h6" stroke-width="2"/></svg></button>
            <button aria-label="Восстановить окно"><svg viewBox="0 0 10 10"><path d="M1 5h5v4H1zM3 4V2h6v4H7" stroke-width="1.500"/></svg></button>
            <button aria-label="Закрыть окно"><svg viewBox="0 0 10 10"><path d="M2 2l6 6M8 2L2 8" stroke-width="2.400"/></svg></button>
          </div>
        </div>
      </nav>

      <div class="toolrow">
        <div class="group"><i class="grip"></i>
          <button class="tool" aria-label="Открыть"><svg><use href="#folder"/></svg></button><button class="drop" aria-label="Недавние файлы"></button>
          <button class="tool" aria-label="Сохранить"><svg><use href="#save"/></svg></button>
          <button class="tool" aria-label="Печать"><svg><use href="#printer"/></svg></button>
          <button class="tool" aria-label="Отменить"><svg><use href="#undo"/></svg></button>
          <button class="tool" aria-label="Вернуть"><svg><use href="#redo"/></svg></button>
        </div>
        <div class="group snap"><i class="grip"></i>
          <button class="tool" aria-label="Оси"><svg><use href="#axes"/></svg></button>
          <button class="tool" aria-label="Сетка"><svg><use href="#dots"/></svg></button>
          <button class="tool tight" aria-label="Размеры"><svg><use href="#ruler"/></svg></button><button class="drop" aria-label="Виды размеров"></button>
          <i class="sep"></i>
          <button class="tool on" aria-label="Привязка"><svg><use href="#magnet"/></svg></button>
          <i class="sep"></i>
          <button class="tool" aria-label="Двери"><svg><use href="#door-q"/></svg></button>
          <button class="tool" aria-label="Ящики"><svg><use href="#drawer-q"/></svg></button>
          <i class="sep"></i>
          <button class="tool" aria-label="Выбор"><svg><use href="#pick"/></svg></button>
        </div>
        <div class="group"><i class="grip"></i>
          <button class="tool" aria-label="Угол"><svg><use href="#angle"/></svg></button>
          <button class="tool" aria-label="Пересечение"><svg><use href="#cross-pt"/></svg></button>
          <button class="tool" aria-label="Лучи"><svg><use href="#rays"/></svg></button>
          <button class="tool" aria-label="Параллели"><svg><use href="#lines"/></svg></button>
        </div>
        <div class="group"><i class="grip"></i>
          <button class="tool" aria-label="Увеличить"><svg><use href="#zoom-in"/></svg></button>
          <button class="tool" aria-label="Показать все"><svg><use href="#fit"/></svg></button>
          <button class="tool" aria-label="Показать во всех окнах"><svg><use href="#fit-all"/></svg></button>
          <button class="tool" aria-label="Обновить"><svg><use href="#brush-win"/></svg></button>
        </div>
        <div class="group"><i class="grip"></i>
          <button class="tool on" aria-label="Библиотекарь"><svg><use href="#book"/></svg></button>
          <button class="tool on" aria-label="Структура модели"><svg><use href="#tree"/></svg></button>
          <button class="tool" aria-label="История"><svg><use href="#list-clock"/></svg></button>
          <button class="tool" aria-label="Поиск"><svg><use href="#list-find"/></svg></button>
        </div>
        <div class="group"><i class="grip"></i>
          <button class="tool sky" aria-label="Базис"><svg><use href="#logo"/></svg></button>
          <button class="tool" aria-label="Раскрой"><svg><use href="#scissors"/></svg></button>
          <button class="tool" aria-label="Сверление"><svg><use href="#drill"/></svg></button>
          <button class="tool" aria-label="Смета"><svg><use href="#sigma"/></svg></button>
          <button class="tool" aria-label="Обмен"><svg><use href="#shapes"/></svg></button>
        </div>
      </div>

      <div class="toolrow furniture">
        <div class="group"><i class="grip"></i>
          <button class="tool" aria-label="Прямой шкаф"><svg><use href="#wardrobe"/></svg></button>
          <button class="tool" aria-label="Угловой шкаф"><svg><use href="#corner1"/></svg></button>
          <button class="tool" aria-label="Скошенный шкаф"><svg><use href="#corner2"/></svg></button>
          <button class="tool" aria-label="Двери"><svg><use href="#doors"/></svg></button>
          <button class="tool" aria-label="Тумба"><svg><use href="#chest"/></svg></button>
          <button class="tool" aria-label="Полки"><svg><use href="#shelves"/></svg></button>
          <button class="tool" aria-label="Арка"><svg><use href="#arch"/></svg></button>
          <button class="tool" aria-label="Опора"><svg><use href="#wheel"/></svg></button>
          <button class="tool" aria-label="Штанга"><svg><use href="#tube"/></svg></button>
        </div>
        <div class="group"><i class="grip"></i>
          <button class="tool" aria-label="Удалить стойку"><svg><use href="#panel-v" x="4"/><use href="#cross"/></svg></button>
          <button class="tool" aria-label="Удалить секцию"><svg><use href="#rack"/><use href="#cross"/></svg></button>
          <button class="tool" aria-label="Удалить дверь"><svg><use href="#door"/><use href="#cross"/></svg></button>
          <button class="tool" aria-label="Удалить штангу"><svg><use href="#tube"/><use href="#cross"/></svg></button>
          <button class="tool" aria-label="Вставить стойку"><svg><use href="#insert"/></svg></button>
          <button class="tool" aria-label="Кромка"><svg><use href="#edge"/></svg></button>
          <button class="tool" aria-label="Расстояние"><svg><use href="#gap"/></svg></button>
        </div>
      </div>

      <div class="statusrow">
        <div class="group model"><i class="grip"></i><svg><use href="#help"/></svg><span>Прямой 1000 x 2400 x 580</span></div>
        <div class="group coords"><i class="grip"></i>
          <label for="cx">X</label><input id="cx" value="-300,952">
          <label for="cy">Y</label><input id="cy" value="1876,646">
          <label for="cz">Z</label><input id="cz" value="0">
        </div>
        <div class="group blank"><i class="grip"></i></div>
        <div class="steps"><i class="grip"></i>
          <label for="sh"><u>Ш</u></label><span class="combo"><select id="sh"><option>10</option></select></span>
          <label for="shs"><u>Ш</u>С</label><span class="combo"><select id="shs" disabled><option>32</option></select></span>
        </div>
      </div>

      <main class="work">
        <div class="side views">
          <i class="grip-h"></i>
          <button aria-label="Вид слева"><svg viewBox="0 0 24 24"><path d="M0 6l6-6v18l-6 6z" fill="#35b6f2"/><use href="#cube-wire"/></svg></button>
          <button class="on" aria-label="Вид спереди"><svg viewBox="0 0 24 24"><path d="M6.500 1v17H23" fill="none" stroke="#557"/><path d="M0 6h18v18H0z" fill="#35b6f2"/><use href="#cube-solid"/></svg></button>
          <button aria-label="Вид сверху"><svg viewBox="0 0 24 24"><path d="M0 6l6-6h18l-6 6z" fill="#35b6f2"/><use href="#cube-wire"/></svg></button>
          <button aria-label="Изометрия"><svg viewBox="0 0 24 24"><path d="M6 2l17 16L1 23z" fill="#35b6f2"/><use href="#cube-wire"/></svg></button>
          <button aria-label="Перспектива"><svg viewBox="0 0 24 24"><path d="M2.500 5.500h15v18h-15zM9.500 1.500h13v15h-13zM2.500 5.500l7-4M17.500 5.500l5-4M17.500 23.500l4-6" fill="none" stroke="#000"/></svg></button>
          <button aria-label="Спроецировать" class="dim"><svg viewBox="0 0 24 24"><path d="M.5 8.500l6-5h14v14l-5 6H.5zM.5 8.500h15v15M15.500 8.500l5-5M4 19l5-5M6 14h3v3M11 0v7M9 5l2 2 2-2M24 13h-7M19 11l-2 2 2 2" fill="none" stroke="currentColor"/></svg></button>
          <button aria-label="Сечение вперед"><svg viewBox="0 0 24 24"><use href="#cube-cut"/><path d="M1 18h6v6l-2-2-3 2-1-1 2-3z" fill="#999"/></svg></button>
          <button aria-label="Сечение назад"><svg viewBox="0 0 24 24"><use href="#cube-cut"/><path d="M1 3h6v6L5 7 2 9 1 8l2-3z" fill="#999"/></svg></button>
          <i class="rule"></i>
          <button aria-label="Повернуть"><svg><use href="#rotate"/></svg></button>
          <i class="rule"></i>
          <button aria-label="Текстуры" class="dim"><svg><use href="#cube-wood"/></svg></button>
          <button aria-label="Текстуры с контуром"><svg><use href="#cube-wood"/></svg></button>
          <button aria-label="Без невидимых линий"><svg><use href="#cube-solid"/></svg></button>
          <button class="on" aria-label="Полупрозрачный"><svg viewBox="0 0 24 24"><path d="M6.500 1v17H23M.5 23.500l6-6" fill="none" stroke="#7fa4bf"/><use href="#cube-solid"/></svg></button>
          <button aria-label="Каркас"><svg><use href="#cube-wire"/></svg></button>
          <i class="rule"></i>
          <button aria-label="Окна"><svg><use href="#layout"/></svg></button>
          <i class="rule"></i>
          <button aria-label="Снимок"><svg><use href="#camera"/></svg></button>
          <button aria-label="Рендер"><svg><use href="#vray"/></svg></button>
          <button class="with-drop" aria-label="Материалы"><svg><use href="#materials"/></svg><i class="tri"></i></button>
          <button class="lamp" aria-label="Свет"><svg><use href="#bulb"/></svg><i class="tri-right"></i></button>
        </div>

        <div class="side panels">
          <i class="grip-h"></i>
          <button aria-label="Вертикальная панель"><svg><use href="#panel-v"/></svg></button>
          <button aria-label="Горизонтальная панель"><svg><use href="#board-h"/></svg></button>
          <button aria-label="Фронтальная панель"><svg><use href="#board-f"/></svg></button>
          <button aria-label="Набор полок"><svg><use href="#stack"/></svg></button>
          <button aria-label="Ящик"><svg><use href="#box"/></svg></button>
          <button aria-label="Двери"><svg><use href="#hatch-door"/></svg></button>
        </div>

        <section class="dock library">
          <div class="dock-title"><h2>Библиотекарь</h2><button aria-label="Закрыть"><svg viewBox="0 0 10 10"><path d="M1.500 1.500l7 7M8.500 1.500l-7 7" stroke-width="2"/></svg></button></div>
          <nav class="dock-menu"><button>Файл</button><button>Операции</button><button>Сервис</button></nav>
          <div class="lib-tools">
            <div class="lib-row">
              <button aria-label="Создать"><svg><use href="#page"/></svg></button>
              <button aria-label="Открыть"><svg><use href="#folder"/></svg></button>
              <button aria-label="Добавить"><svg><use href="#folder"/><use href="#plus"/></svg></button>
              <i class="sep"></i>
              <button aria-label="Сохранить"><svg><use href="#disk"/></svg></button>
              <button aria-label="Печать"><svg><use href="#print-o"/></svg></button>
            </div>
            <div class="lib-row">
              <button aria-label="Метка"><svg><use href="#tag"/></svg></button>
              <button aria-label="Переименовать"><svg><use href="#rename"/></svg></button>
              <button aria-label="Текстура"><svg><use href="#texture"/></svg></button>
              <i class="sep"></i>
              <button aria-label="Вверх"><svg><use href="#up"/></svg></button>
              <button aria-label="Вниз"><svg><use href="#down"/></svg></button>
            </div>
            <div class="lib-row">
              <button aria-label="Вставить"><svg><use href="#insert-o"/></svg></button>
              <button aria-label="Крепеж"><svg><use href="#nut-o"/></svg></button>
              <button aria-label="Заменить"><svg><use href="#mirror-o"/></svg></button>
              <button aria-label="Заменить фурнитуру"><svg><use href="#wheels-o"/></svg></button>
              <i class="sep"></i>
              <button aria-label="Просмотр"><svg><use href="#preview"/></svg></button>
            </div>
          </div>
          <div class="lib-list"></div>
        </section>

        <i class="splitter"></i>

        <section class="document">
          <svg class="canvas" role="img" aria-label="Шкаф 1000">
            <defs>
              <g id="drawer" class="thin">
                <path d="M14.500 557.500h149v66h-149zM14 569.500h149M14 613.500h149M14 619.500h149M19.500 569v50M157.500 569v50"/>
                <path d="M13.500 569v50" stroke-width="2"/>
                <path d="M14 577.500h17v2H14M16.500 593.500h11v3h-11zM14 610.500h17v1H14M14 616h17M163 577.500h-17v2h17M161.500 593.500h-11v3h11zM163 610.500h-17v1h17M163 616h-17"/>
                <circle cx="40" cy="616" r="1"/><circle cx="136" cy="616" r="1.500"/>
              </g>
              <g id="hinge" class="thin"><circle cx="8" cy="0" r="5.500"/><path d="M9.500 -9v2M9.500 7v2"/></g>
            </defs>
            <g transform="translate(308 87)">
              <g class="thin">
                <path d="M6 6.500h323M3.500 0v755M6.500 6v755M164.500 6v755M170.500 6v755M329.500 6v755M332.500 6v755"/>
                <path d="M6 109.500h158M6 115.500h158M6 217.500h158M6 223.500h158M6 324.500h158M6 330.500h158M6 433.500h158M6 439.500h158M6 540.500h158M6 546.500h158M6 701.500h158M6 707.500h158M170 701.500h159M170 707.500h159"/>
                <path d="M3 112.500h5M6.500 109.500h7v6M3 220.500h5M6.500 217.500h7v6M3 327.500h5M6.500 324.500h7v6M3 436.500h5M6.500 433.500h7v6M3 543.500h5M13.500 540v6M158.500 540v6M13.500 701v6M158.500 701v6M177.500 701v6M322.500 701v6M9.500 538v12M9.500 697v10M12.500 546v155"/>
                <path d="M3 3.500h7M325 3.500h7M76 3v2M143 3v2M210 3v2M277 3v2M76 542v2M143 542v2M240 704h2M307 704h2M9 574v1M9 641v1"/>
              </g>
              <use href="#drawer"/><use href="#drawer" y="77"/>
              <use href="#hinge" y="37"/><use href="#hinge" y="272"/><use href="#hinge" y="508"/><use href="#hinge" y="744"/>
              <use href="#hinge" x="319" y="37"/><use href="#hinge" x="319" y="508"/><use href="#hinge" x="319" y="744"/>
              <path d="M1 760V1h334v760" class="bold"/>
              <path d="M168 0v760" class="divider"/>
            </g>
          </svg>
          <div class="doc-tabs"><button class="doc-tab">Шкаф 1000.shn</button><i></i></div>
        </section>

        <i class="splitter thin-split"></i>

        <section class="dock structure">
          <div class="dock-title"><h2>Структура модели</h2>
            <button aria-label="Свернуть"><svg viewBox="0 0 10 10"><path d="M2 7h6" stroke-width="2"/></svg></button>
            <button aria-label="Развернуть"><svg viewBox="0 0 10 10"><path d="M1.500 1.500h7v7h-7zM1 2.500h8"/></svg></button>
            <button aria-label="Закрыть"><svg viewBox="0 0 10 10"><path d="M1.500 1.500l7 7M8.500 1.500l-7 7" stroke-width="2"/></svg></button>
          </div>
          <div class="structure-tools">
            <button aria-label="Настройка"><svg><use href="#tools"/></svg></button>
            <button aria-label="Добавить позицию"><svg><use href="#leader"/><use href="#l-plus"/></svg></button>
            <button aria-label="Запросить позицию"><svg><use href="#leader"/><use href="#l-ask"/></svg></button>
            <button aria-label="Позиция"><svg><use href="#leader"/></svg></button>
            <button aria-label="Удалить позицию"><svg><use href="#leader"/><use href="#l-minus"/></svg></button>
            <button class="more" aria-label="Еще">»</button>
          </div>
          <div class="tree">
            <div class="tree-head"><span>Объект</span><span>Поз.</span><span></span></div>
            <div class="tree-body">
              <ul class="tree-list" id="tree-list"></ul>
              <div class="scrollbar"><svg viewBox="0 0 16 16"><path d="M5 10l3-3 3 3"/></svg><i></i><svg viewBox="0 0 16 16"><path d="M5 6l3 3 3-3"/></svg></div>
            </div>
          </div>
        </section>

        <div class="side right">
          <i class="grip-h"></i>
          <button aria-label="Чертеж"><svg><use href="#sheet"/></svg></button>
          <button aria-label="Заменить материалы"><svg><use href="#mat-arrow"/></svg></button>
          <button aria-label="Заменить материал"><svg><use href="#mat-go"/></svg></button>
          <button class="on" aria-label="Крепеж"><svg><use href="#screw"/></svg></button>
          <button aria-label="Заменить крепеж"><svg><use href="#screw-go"/></svg></button>
          <button aria-label="Развернуть крепеж"><svg><use href="#turn"/></svg></button>
          <button aria-label="Указать крепеж"><svg><use href="#screw-pt"/></svg></button>
          <button aria-label="План"><svg><use href="#plan"/></svg></button>
        </div>
      </main>

      <footer class="taskbar">
        <button class="task" aria-label="Пуск"><svg><use href="#win"/></svg></button>
        <button class="task" aria-label="Представление задач"><svg class="wide"><use href="#taskview"/></svg></button>
        <button class="task"><span class="ps">Ps</span></button>
        <button class="task-window"><svg><use href="#chrome"/></svg><span>Базис-Мебельщик ...</span></button>
        <button class="task" aria-label="Shift"><svg><use href="#t-shift"/></svg></button>
        <button class="task" aria-label="Corel"><svg><use href="#t-corel"/></svg></button>
        <button class="task" aria-label="TeamViewer"><svg><use href="#t-tv"/></svg></button>
        <button class="task" aria-label="3ds Max"><svg><use href="#t-max"/></svg></button>
        <button class="task" aria-label="AutoCAD"><svg><use href="#t-acad"/></svg></button>
        <button class="task" aria-label="uTorrent"><svg><use href="#t-ut"/></svg></button>
        <button class="task" aria-label="Защита"><svg><use href="#t-shield"/></svg></button>
        <button class="task" aria-label="Калькулятор"><svg><use href="#t-calc"/></svg></button>
        <button class="task-window"><svg><use href="#t-rar"/></svg><span>UpdateBazis11.zip</span></button>
        <button class="task-window"><svg><use href="#t-folder"/></svg><span>шкафы</span></button>
        <button class="task-window green"><svg><use href="#logo"/></svg><span>БАЗИС-Шкаф 11 - [...</span></button>
        <button class="task-window green active"><svg><use href="#logo"/></svg><span>Произошла ошибка</span></button>
        <div class="tray">
          <svg><use href="#y-sync"/></svg><svg><use href="#y-router"/></svg><svg><use href="#t-shield"/></svg><svg><use href="#y-pen"/></svg><svg><use href="#y-nv"/></svg><svg><use href="#y-usb"/></svg><svg><use href="#y-dish"/></svg><svg><use href="#y-net"/></svg><svg><use href="#y-vol"/></svg>
          <span>РУС</span><time>16:13</time>
        </div>
      </footer>
    </div>

    <form class="dialog" role="dialog" aria-labelledby="dialog-title">
      <div class="dialog-title" id="dialog-title">Произошла ошибка</div>
      <div class="dialog-head">
        <strong>В программе произошла ошибка</strong>
        <svg viewBox="0 0 32 32"><circle cx="16" cy="16" r="15.500" fill="url(#red)" stroke="#6d0606"/><path d="M10 10l12 12M22 10L10 22" stroke="#fff" stroke-width="4.500"/></svg>
      </div>
      <div class="dialog-body">
        <p class="fault">Access violation at address 0129534A in module 'Shkaf.exe'. Write of address 0000002A.</p>
        <p class="ask"><strong>Пожалуйста, сообщите нам о возникшей проблеме.</strong></p>
        <p class="sent">Мы создали отчет который вы можете отправить нам для исправления ошибки.</p>
        <p class="view">Чтобы посмотреть данные, содержащиеся в отчете, <a href="#report">нажмите здесь.</a></p>
        <label for="steps">Опишите действия, которые привели к возникновению этой проблемы:</label>
        <div class="memo">
          <textarea id="steps"></textarea>
          <div class="scrollbar off"><svg viewBox="0 0 16 16"><path d="M5 10l3-3 3 3"/></svg><svg viewBox="0 0 16 16"><path d="M5 6l3 3 3-3"/></svg></div>
        </div>
        <div class="dialog-buttons">
          <button type="button" class="default">Отправить отчет об ошибке</button>
          <button type="button">Не отправлять</button>
        </div>
      </div>
    </form>

    <script src="script.js"></script>
  </body>
</html>
```

FILE: styles.css
```css
* {
  box-sizing: border-box;
}

body {
  margin: 0;
  font: 11px/16px "Open Sans", "Noto Sans", sans-serif;
  color: #111;
  background: #fff;
  overflow: hidden;
}

button {
  font: inherit;
  color: inherit;
  background: none;
  border: 0;
  padding: 0;
}

h1,
h2,
p,
ul {
  margin: 0;
  padding: 0;
}

svg {
  display: block;
  flex: none;
  width: 24px;
  height: 24px;
}

.sprite {
  position: absolute;
  width: 0;
  height: 0;
}

.app {
  display: flex;
  flex-direction: column;
  height: 100vh;
}

.green {
  color: #3f9a52;
}

/* title and menu */

.titlebar {
  display: flex;
  align-items: center;
  gap: 5px;
  height: 23px;
  padding-left: 2px;
}

.icon16 {
  width: 16px;
  height: 16px;
}

.titlebar h1 {
  flex: 1;
  font-size: 12px;
  font-weight: 400;
  color: #8a8a8a;
}

.win-buttons {
  display: flex;
}

.win-buttons button {
  display: flex;
  justify-content: center;
  width: 46px;
}

.win-buttons svg {
  width: 12px;
  height: 12px;
  fill: none;
  stroke: #777;
}

.menubar {
  display: flex;
  align-items: center;
  gap: 17px;
  height: 26px;
  border-bottom: 1px solid #c9c9c9;
}

.menubar .grip {
  margin-right: -10px;
}

.grip {
  flex: none;
  width: 9px;
  align-self: stretch;
  background: repeating-linear-gradient(#b9b9b9 0 2px, transparent 2px 4px) 3px 4px / 2px calc(100% - 8px) no-repeat;
}

.grip-h {
  flex: none;
  height: 8px;
  width: 100%;
  background: repeating-linear-gradient(90deg, #b9b9b9 0 2px, transparent 2px 4px) 3px 3px / calc(100% - 6px) 2px no-repeat;
}

.menu-right {
  display: flex;
  align-items: center;
  margin-left: auto;
  padding-right: 8px;
}

.license {
  border-left: 1px solid #777;
  padding-left: 8px;
}

.pause {
  margin-left: 8px;
}

.pause svg {
  width: 24px;
  height: 16px;
}

.globe {
  width: 16px;
  height: 16px;
  margin: 0 24px 0 15px;
  fill: none;
  stroke: #111;
}

.mdi-buttons {
  display: flex;
  gap: 7px;
  margin-left: 15px;
}

.mdi-buttons svg {
  width: 12px;
  height: 12px;
  fill: none;
  stroke: #000;
}

/* toolbars */

.toolrow {
  display: flex;
}

.group {
  display: flex;
  align-items: center;
  height: 34px;
  padding-right: 1px;
  border-right: 1px solid #c9c9c9;
  border-bottom: 1px solid #c9c9c9;
}

.snap {
  width: 259px;
}

.tool {
  display: flex;
  align-items: center;
  justify-content: center;
  width: 31px;
  height: 30px;
}

.tight {
  width: 28px;
}

.furniture .grip {
  width: 8px;
}

.on {
  background: #cce5fa;
  box-shadow: inset 0 0 0 1px #a5cdef;
}

.sky {
  color: #2386e2;
}

.drop {
  width: 11px;
}

.drop::before,
.tri {
  content: "";
  display: block;
  width: 0;
  border: 3px solid transparent;
  border-top: 4px solid #222;
  border-bottom: 0;
}

.sep {
  flex: none;
  width: 1px;
  height: 24px;
  margin: 0 3px;
  background: #8a8a8a;
}

.statusrow {
  display: flex;
  height: 36px;
  border-bottom: 1px solid #c9c9c9;
}

.statusrow .group {
  height: 35px;
  border-bottom: 0;
}

.model {
  width: 260px;
  gap: 4px;
  font-size: 13px;
}

.coords {
  width: 259px;
  font-size: 12px;
}

.coords label {
  width: 17px;
  text-align: center;
}

.coords input {
  width: 64px;
  height: 23px;
  padding: 0 3px 3px;
  border: 1px solid #777;
  font: inherit;
}

.blank {
  width: 33px;
}

.steps {
  display: flex;
  align-items: center;
  margin-left: auto;
  padding-right: 2px;
  font-size: 12px;
}

.steps label {
  padding: 0 4px;
}

.combo {
  position: relative;
}

.combo::after {
  content: "";
  position: absolute;
  top: 7px;
  right: 7px;
  width: 6px;
  height: 6px;
  border: solid #666;
  border-width: 0 1px 1px 0;
  transform: rotate(45deg);
}

.combo select {
  display: block;
  appearance: none;
  width: 65px;
  height: 24px;
  padding: 0 3px;
  border: 1px solid #777;
  border-radius: 0;
  background: #fff;
  color: #111;
  font: inherit;
}

.combo select:disabled {
  border-color: #ccc;
  color: #777;
}

/* workspace */

.work {
  display: flex;
  flex: 1;
  min-height: 0;
}

.side {
  display: flex;
  flex-direction: column;
  align-items: center;
  align-self: flex-start;
  flex: none;
  border-right: 1px solid #d5d5d5;
  border-bottom: 1px solid #d5d5d5;
}

.side button {
  display: flex;
  align-items: center;
  justify-content: center;
  width: calc(100% - 4px);
  height: 30px;
}

.views {
  width: 48px;
}

.dim {
  color: #999;
}

.rule {
  width: 40px;
  height: 1px;
  margin: 2px 0 3px;
  background: #8a8a8a;
}

.views .with-drop {
  gap: 8px;
}

.views .lamp {
  flex-direction: column;
  height: 38px;
}

.tri-right {
  border: 3px solid transparent;
  border-left: 4px solid #000;
  border-right: 0;
}

.panels {
  width: 35px;
}

.dock {
  display: flex;
  flex-direction: column;
  flex: none;
}

.library {
  width: 183px;
  border-left: 1px solid #d5d5d5;
}

.dock-title {
  display: flex;
  align-items: center;
  gap: 5px;
  height: 21px;
  padding: 2px 6px 0 7px;
  background: linear-gradient(#fff, #e6e6e9);
  border-right: 1px solid #aaa;
  border-bottom: 1px solid #aaa;
}

.dock-title h2 {
  flex: 1;
  font-size: 11px;
  font-weight: 700;
  color: #3160ae;
}

.dock-title svg {
  width: 10px;
  height: 10px;
  fill: none;
  stroke: #2b5aa8;
}

.dock-menu {
  display: flex;
  align-items: center;
  gap: 17px;
  height: 25px;
  padding-left: 11px;
  border-bottom: 1px solid #c9c9c9;
}

.lib-tools {
  height: 94px;
  border-bottom: 1px solid #bbb;
}

.lib-row {
  display: flex;
  align-items: center;
  height: 31px;
  padding-left: 2px;
}

.lib-row button {
  padding: 0 3px;
}

.lib-row svg {
  width: 21px;
  height: 21px;
}

.lib-row .sep {
  height: 20px;
}

.lib-list {
  flex: 1;
  margin: 1px 2px 4px;
  border: 1px solid #999;
  border-right-width: 2px;
  border-bottom: 2px solid #222;
}

.splitter {
  flex: none;
  width: 9px;
  background: repeating-linear-gradient(#999 0 2px, transparent 2px 4px) 1px 50% / 2px 26px no-repeat #f0f0f0;
}

.thin-split {
  width: 7px;
}

.structure + .side {
  margin-top: 34px;
}

.document {
  display: flex;
  flex-direction: column;
  flex: 1;
  min-width: 0;
}

.canvas {
  flex: 1;
  width: 100%;
  min-height: 0;
  border-bottom: 1px solid #d5d5d5;
}

.thin {
  fill: none;
  stroke: #858585;
}

.bold {
  fill: none;
  stroke: #000;
  stroke-width: 2px;
}

.divider {
  stroke: #000;
  stroke-width: 4px;
}

.doc-tabs {
  display: flex;
  height: 27px;
  padding-top: 3px;
}

.doc-tab {
  width: 97px;
  border-right: 1px solid #d5d5d5;
}

.doc-tabs i {
  flex: 1;
  border-top: 1px solid #d5d5d5;
  border-right: 1px solid #d5d5d5;
}

/* model structure */

.structure {
  width: 209px;
}

.structure-tools {
  display: flex;
  align-items: center;
  height: 34px;
  padding-left: 3px;
}

.structure-tools button {
  width: 29px;
}

.structure-tools svg {
  margin: auto;
}

.structure-tools .more {
  margin-left: auto;
  align-self: flex-start;
  width: 20px;
  font-size: 15px;
  font-weight: 700;
}

.tree {
  display: flex;
  flex-direction: column;
  height: 607px;
  margin-right: 2px;
  border: 1px solid #999;
  border-right-width: 2px;
  border-bottom: 4px double #000;
  line-height: 18px;
}

.tree-head {
  display: grid;
  grid-template-columns: 146px 40px 1fr;
  height: 20px;
}

.tree-head span {
  padding: 2px 0 0 7px;
  border-right: 1px solid #e2e2e2;
}

.tree-head span:last-child {
  border: 0;
}

.tree-body {
  display: flex;
  flex: 1;
  min-height: 0;
}

.tree-list {
  flex: 1;
  min-width: 0;
  overflow: hidden;
  list-style: none;
}

.tree-list li {
  display: flex;
  align-items: center;
  height: 18px;
  padding-left: 34px;
  white-space: pre;
}

.tree-list .root {
  padding-left: 12px;
}

.tree-list svg {
  width: 18px;
  height: 18px;
}

.branch {
  flex: none;
  width: 10px;
  height: 18px;
  background: linear-gradient(#999, #999) 0 50% / 100% 1px no-repeat;
  border-left: 1px solid #999;
}

.branch.group-node {
  display: flex;
  align-items: center;
}

.tree-list .toggle {
  width: 9px;
  height: 9px;
  flex: none;
  fill: #fff;
  stroke: #7688a0;
}

.group-node .toggle {
  margin-left: -5px;
}

.stub {
  width: 6px;
  height: 1px;
  margin-right: 2px;
  background: #999;
}

.label {
  margin-left: 4px;
}

.size {
  margin-left: 9px;
  color: #888;
}

.scrollbar {
  display: flex;
  flex-direction: column;
  justify-content: space-between;
  width: 16px;
  background: #f0f0f0;
}

.scrollbar svg {
  width: 16px;
  height: 16px;
  fill: none;
  stroke: #555;
  stroke-width: 2px;
}

.scrollbar i {
  height: 130px;
  margin-bottom: auto;
  background: #cdcdcd;
}

.scrollbar.off svg {
  stroke: #bbb;
}

.right {
  flex: 1 0 35px;
  max-width: 36px;
}

/* taskbar */

.taskbar {
  display: flex;
  height: 30px;
  flex: none;
  background: #1b1d20;
  color: #fff;
  font-size: 12px;
}

.taskbar svg {
  width: 18px;
  height: 18px;
}

.taskbar .wide {
  width: 20px;
  height: 20px;
}

.task {
  display: flex;
  align-items: center;
  justify-content: center;
  width: 37px;
}

.ps {
  width: 16px;
  border: 1px solid #57c0e8;
  border-radius: 2px;
  font-size: 9px;
  line-height: 14px;
  font-weight: 700;
  color: #8fd8f5;
}

.task-window {
  display: flex;
  align-items: center;
  gap: 3px;
  width: 158px;
  height: 29px;
  margin: 1px 2px 0 1px;
  padding-left: 8px;
  background: #4b4d50;
  border: 1px solid #6b6d70;
}

.task-window span {
  color: #fff;
}

.active {
  background: #77797b;
  border-color: #ddd;
}

.tray {
  display: flex;
  align-items: center;
  gap: 6px;
  margin-left: auto;
  padding-right: 15px;
}

.tray span {
  margin: 0 7px 0 4px;
}

/* error dialog, floats over the workspace */

.dialog {
  position: absolute;
  top: 313px;
  left: calc(50% - 208px);
  width: 415px;
  background: #f0f0f0;
  border: 1px solid #3f7d9c;
  line-height: 15px;
}

.dialog-title {
  padding: 4px 3px 6px;
  background: #fff;
  font-size: 12px;
}

.dialog-head {
  display: flex;
  align-items: center;
  justify-content: space-between;
  height: 51px;
  padding: 0 8px 0 7px;
  background: #fff;
  border: 1px solid #000;
}

.dialog-head svg {
  width: 32px;
  height: 32px;
}

.dialog-body {
  padding: 8px;
}

.fault {
  padding: 0 32px 0 3px;
}

.ask {
  margin-top: 10px;
}

.sent {
  margin-top: 2px;
}

.view {
  margin: 12px 0 42px;
}

.view a {
  color: #1414c8;
}

.dialog-body label {
  display: block;
  padding-right: 48px;
}

.memo {
  display: flex;
  height: 73px;
  margin-top: 1px;
  border: 1px solid #2478a5;
  background: #fff;
}

.memo textarea {
  flex: 1;
  padding: 2px;
  border: 0;
  background: none;
  resize: none;
  outline: 0;
  font: inherit;
}

.dialog-buttons {
  display: flex;
  justify-content: flex-end;
  gap: 10px;
  padding: 8px 1px 5px;
}

.dialog-buttons button {
  height: 24px;
  padding: 0 9px;
  background: #e1e1e1;
  border: 1px solid #adadad;
}

.dialog-buttons .default {
  border: 2px solid #1a74ad;
}
```

FILE: script.js
```javascript
// [icon, name, size, has children]
const rows = [
  ['panel-h-i', 'Планка цоко...'],
  ['panel-h-i', 'Планка цоко...'],
  ['panel-v-i', 'Стойка', '464x57'],
  ['panel-v-i', 'Стойка', '2294x5'],
  ...Array(8).fill(['panel-h-i', 'Полка', '473x576']),
  ['panel-v-i', 'Стенка задняя'],
  ['stack-i', 'FR 302 дно ...', '', true],
  ['stack-i', 'FR 302 дно ...', '', true],
  ['stack-i', 'Двери', '', true],
  ['panel-h-i', 'Крышка', '964x5'],
  ['panel-h-i', 'Дно', '964x576x1'],
  ['panel-v-i', 'Боковина ле...'],
  ['panel-v-i', 'Боковина пр...'],
  ...Array(11).fill(['screw-i', 'Шуруп 4x30'])
];

const toggle = path =>
  `<svg class="toggle" viewBox="0 0 9 9"><path d="M.5.5h8v8h-8z${path}"/></svg>`;

const root = `<li class="root">${toggle('M2 4.5h5')}<i class="stub"></i><span>Шкаф 1000</span></li>`;

const items = rows.map(
  ([icon, name, size, group]) => `<li>
    <span class="branch ${group ? 'group-node' : ''}">${group ? toggle('M2 4.5h5M4.5 2v5') : ''}</span>
    <svg><use href="#${icon}"/></svg><span class="label">${name}</span>${size ? `<span class="size">${size}</span>` : ''}
  </li>`.replace(/\n\s*/g, '')
);

document.querySelector('#tree-list').innerHTML = root + items.join('');
```
